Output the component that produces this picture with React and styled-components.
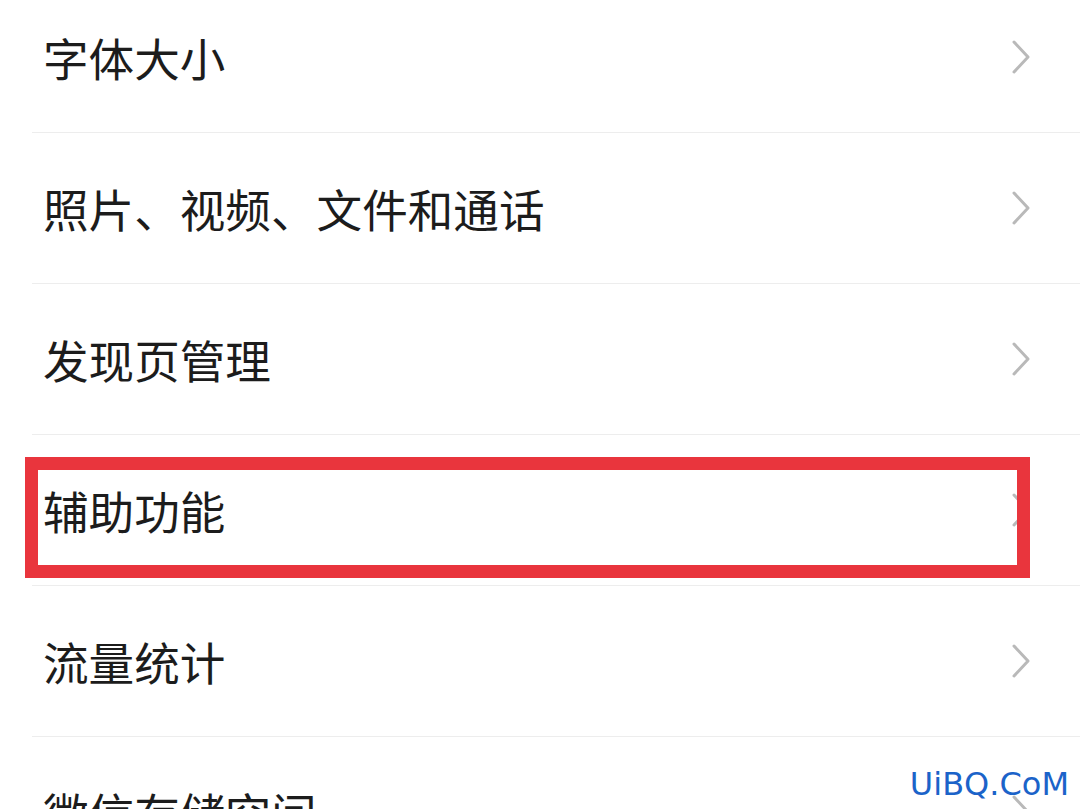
import React from "react";
import styled, { createGlobalStyle } from "styled-components";

const GlobalStyle = createGlobalStyle`
  html, body {
    margin: 0;
    padding: 0;
    background: #fff;
    overflow: hidden;
  }
  body {
    font-family: "Noto Sans CJK SC", "Noto Sans", sans-serif;
  }
`;

const Page = styled.div`
  position: relative;
  width: 1080px;
  height: 809px;
  overflow: hidden;
  background: #fff;
`;

const List = styled.div`
  margin-top: -18px;
  display: flex;
  flex-direction: column;
`;

const Item = styled.div`
  position: relative;
  margin-left: 32px;
  height: 151px;
  box-sizing: border-box;
  border-bottom: 1.5px solid #ededed;
  padding: 0 50px 0 11px;
  display: flex;
  align-items: center;
  justify-content: space-between;

  ${({ $marked }) =>
    $marked &&
    `
    &::before {
      content: "";
      position: absolute;
      left: -7px;
      top: 22px;
      width: 1005px;
      height: 121px;
      box-sizing: border-box;
      border: 13px solid #e9353d;
      z-index: 2;
    }
  `}
`;

const Label = styled.span`
  font-size: 45.6px;
  line-height: 1;
  color: #1c1c1c;
  margin-top: 1px;
`;

const Chevron = styled.svg`
  width: 18px;
  height: 34px;
  flex-shrink: 0;
`;

const Watermark = styled.div`
  position: absolute;
  right: 11px;
  bottom: 6px;
  font-family: "DejaVu Sans", Verdana, sans-serif;
  font-size: 32px;
  color: #1b63c9;
  z-index: 3;
`;

const items = [
  "字体大小",
  "照片、视频、文件和通话",
  "发现页管理",
  "辅助功能",
  "流量统计",
  "微信存储空间",
];

const Arrow = () => (
  <Chevron viewBox="0 0 18 34">
    <path
      d="M2 2 L16 17 L2 32"
      fill="none"
      stroke="#b9b9b9"
      strokeWidth="3"
      strokeLinecap="round"
      strokeLinejoin="round"
    />
  </Chevron>
);

export default function App() {
  return (
    <Page>
      <GlobalStyle />
      <List>
        {items.map((t, i) => (
          <Item key={t} $marked={i === 3}>
            <Label>{t}</Label>
            <Arrow />
          </Item>
        ))}
      </List>
      <Watermark>UiBQ.CoM</Watermark>
    </Page>
  );
}
